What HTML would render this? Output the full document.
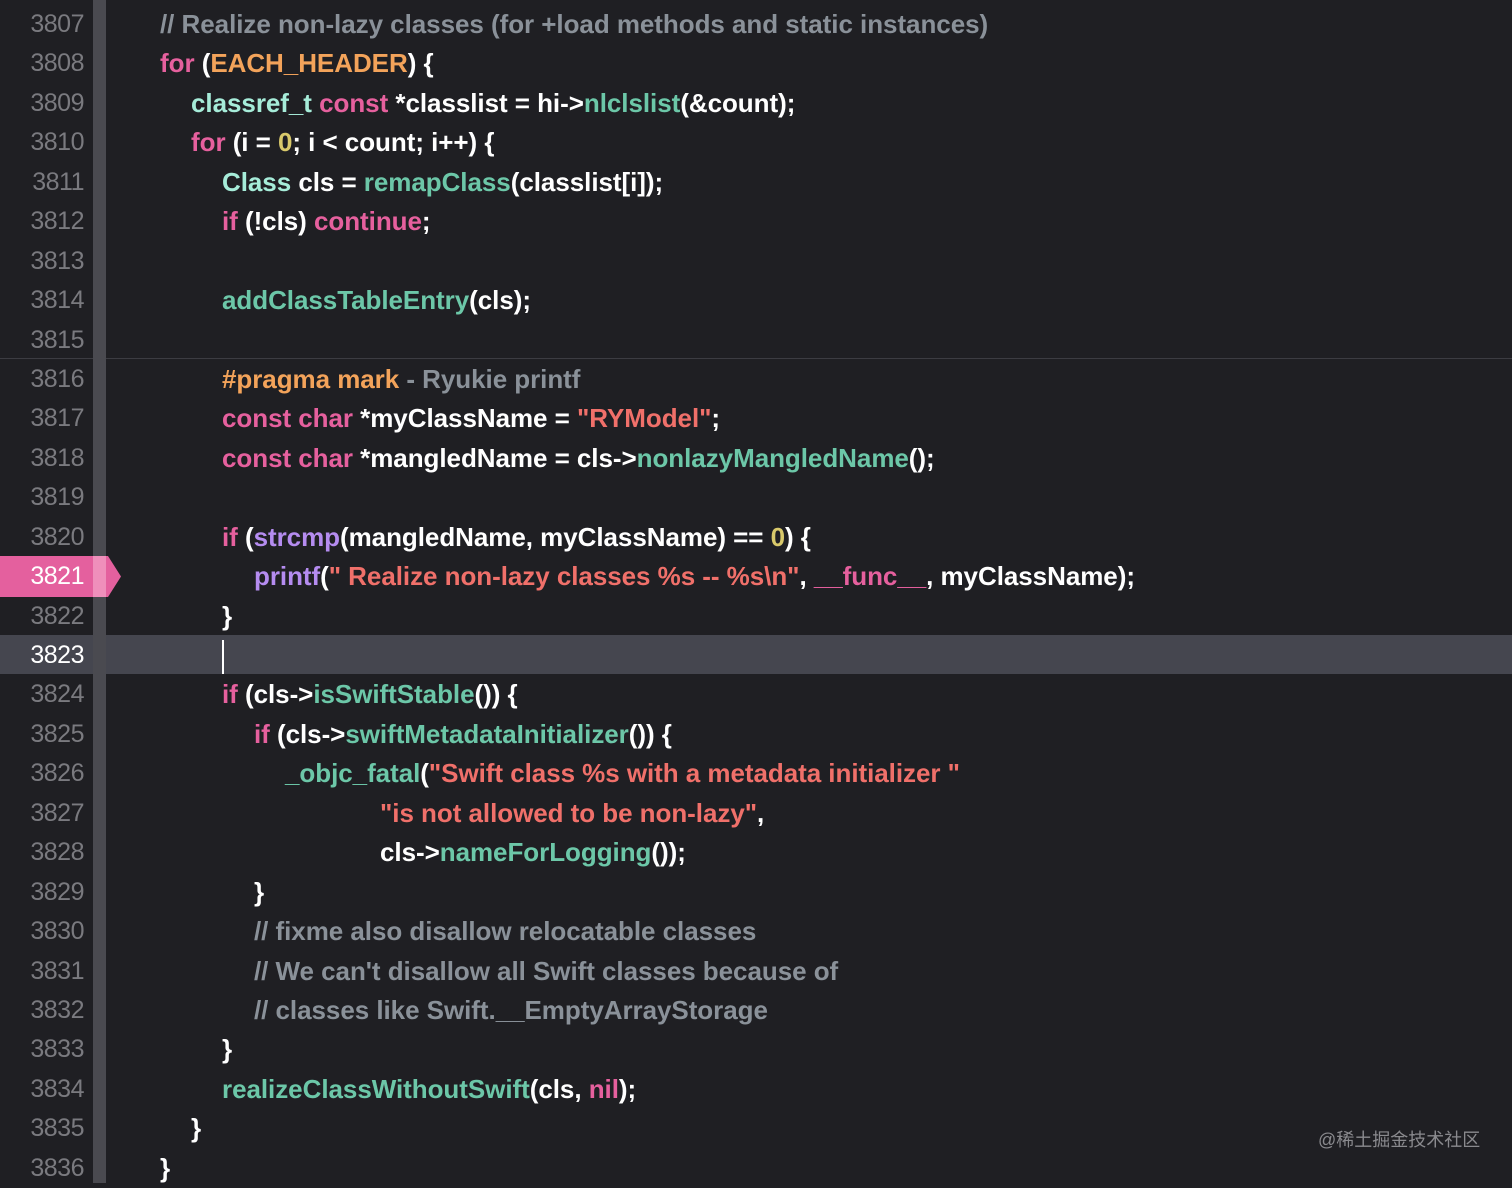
<!DOCTYPE html>
<html><head><meta charset="utf-8"><style>
html,body{margin:0;padding:0;width:1512px;height:1183px;overflow:hidden;background:#1f1f23;}
.row{position:relative;height:39.45px;}
.n{position:absolute;left:0;top:0;width:84px;text-align:right;font:25px/39.45px "Liberation Sans",sans-serif;letter-spacing:-0.5px;color:#7a7a7f;}
.c{position:absolute;top:0;white-space:pre;font:bold 26px/39.45px "Liberation Sans",sans-serif;letter-spacing:-0.05px;color:#ffffff;}
.i0{left:160px}.i1{left:191px}.i2{left:222px}.i3{left:254px}.i4{left:285px}.i7{left:380px}
.w{color:#fff}
.k{color:#e6609e}.cm{color:#8a9199}.pp{color:#f3a35a}.t{color:#a6ecd9}.f{color:#6cc7a8}.s{color:#f0706a}.num{color:#d9c96b}.p{color:#b58cf0}
</style></head><body>
<div style="position:absolute;left:0;top:634.7px;width:1512px;height:39.45px;background:#45464f"></div>
<div style="position:absolute;left:0;top:358px;width:1512px;height:1px;background:#3c3c42"></div>
<div style="position:absolute;left:93px;top:0;width:13px;height:1183px;background:#4a4a50"></div>
<svg style="position:absolute;left:0;top:556px" width="122" height="41"><polygon points="0,0 108,0 121,20.5 108,41 0,41" fill="#e4609e"/><rect x="93" y="0" width="13" height="41" fill="#ef8fbb"/></svg>
<div style="position:absolute;left:0;top:5px;width:1512px">
<div class="row"><div class="n">3807</div><div class="c i0"><span class="cm">// Realize non-lazy classes (for +load methods and static instances)</span></div></div>
<div class="row"><div class="n">3808</div><div class="c i0"><span class="k">for</span> (<span class="pp">EACH_HEADER</span>) {</div></div>
<div class="row"><div class="n">3809</div><div class="c i1"><span class="t">classref_t</span> <span class="k">const</span> *classlist = hi-&gt;<span class="f">nlclslist</span>(&amp;count);</div></div>
<div class="row"><div class="n">3810</div><div class="c i1"><span class="k">for</span> (i = <span class="num">0</span>; i &lt; count; i++) {</div></div>
<div class="row"><div class="n">3811</div><div class="c i2"><span class="t">Class</span> cls = <span class="f">remapClass</span>(classlist[i]);</div></div>
<div class="row"><div class="n">3812</div><div class="c i2"><span class="k">if</span> (!cls) <span class="k">continue</span>;</div></div>
<div class="row"><div class="n">3813</div></div>
<div class="row"><div class="n">3814</div><div class="c i2"><span class="f">addClassTableEntry</span>(cls);</div></div>
<div class="row"><div class="n">3815</div></div>
<div class="row"><div class="n">3816</div><div class="c i2"><span class="pp">#pragma mark</span> <span class="cm">- Ryukie printf</span></div></div>
<div class="row"><div class="n">3817</div><div class="c i2"><span class="k">const char</span> *myClassName = <span class="s">"RYModel"</span>;</div></div>
<div class="row"><div class="n">3818</div><div class="c i2"><span class="k">const char</span> *mangledName = cls-&gt;<span class="f">nonlazyMangledName</span>();</div></div>
<div class="row"><div class="n">3819</div></div>
<div class="row"><div class="n">3820</div><div class="c i2"><span class="k">if</span> (<span class="p">strcmp</span>(mangledName, myClassName) == <span class="num">0</span>) {</div></div>
<div class="row"><div class="n w">3821</div><div class="c i3"><span class="p">printf</span>(<span class="s">" Realize non-lazy classes %s -- %s\n"</span>, <span class="k">__func__</span>, myClassName);</div></div>
<div class="row"><div class="n">3822</div><div class="c i2">}</div></div>
<div class="row"><div class="n w">3823</div><div class="c i2"><span style="display:inline-block;width:2px;height:34px;background:#fff;vertical-align:middle"></span></div></div>
<div class="row"><div class="n">3824</div><div class="c i2"><span class="k">if</span> (cls-&gt;<span class="f">isSwiftStable</span>()) {</div></div>
<div class="row"><div class="n">3825</div><div class="c i3"><span class="k">if</span> (cls-&gt;<span class="f">swiftMetadataInitializer</span>()) {</div></div>
<div class="row"><div class="n">3826</div><div class="c i4"><span class="f">_objc_fatal</span>(<span class="s">"Swift class %s with a metadata initializer "</span></div></div>
<div class="row"><div class="n">3827</div><div class="c i7"><span class="s">"is not allowed to be non-lazy"</span>,</div></div>
<div class="row"><div class="n">3828</div><div class="c i7">cls-&gt;<span class="f">nameForLogging</span>());</div></div>
<div class="row"><div class="n">3829</div><div class="c i3">}</div></div>
<div class="row"><div class="n">3830</div><div class="c i3"><span class="cm">// fixme also disallow relocatable classes</span></div></div>
<div class="row"><div class="n">3831</div><div class="c i3"><span class="cm">// We can't disallow all Swift classes because of</span></div></div>
<div class="row"><div class="n">3832</div><div class="c i3"><span class="cm">// classes like Swift.__EmptyArrayStorage</span></div></div>
<div class="row"><div class="n">3833</div><div class="c i2">}</div></div>
<div class="row"><div class="n">3834</div><div class="c i2"><span class="f">realizeClassWithoutSwift</span>(cls, <span class="k">nil</span>);</div></div>
<div class="row"><div class="n">3835</div><div class="c i1">}</div></div>
<div class="row"><div class="n">3836</div><div class="c i0">}</div></div>
</div>
<div style="position:absolute;left:1318px;top:1128px;font:18px/24px 'Liberation Sans','Noto Sans CJK SC',sans-serif;color:#8a8a8e">@稀土掘金技术社区</div>
</body></html>
